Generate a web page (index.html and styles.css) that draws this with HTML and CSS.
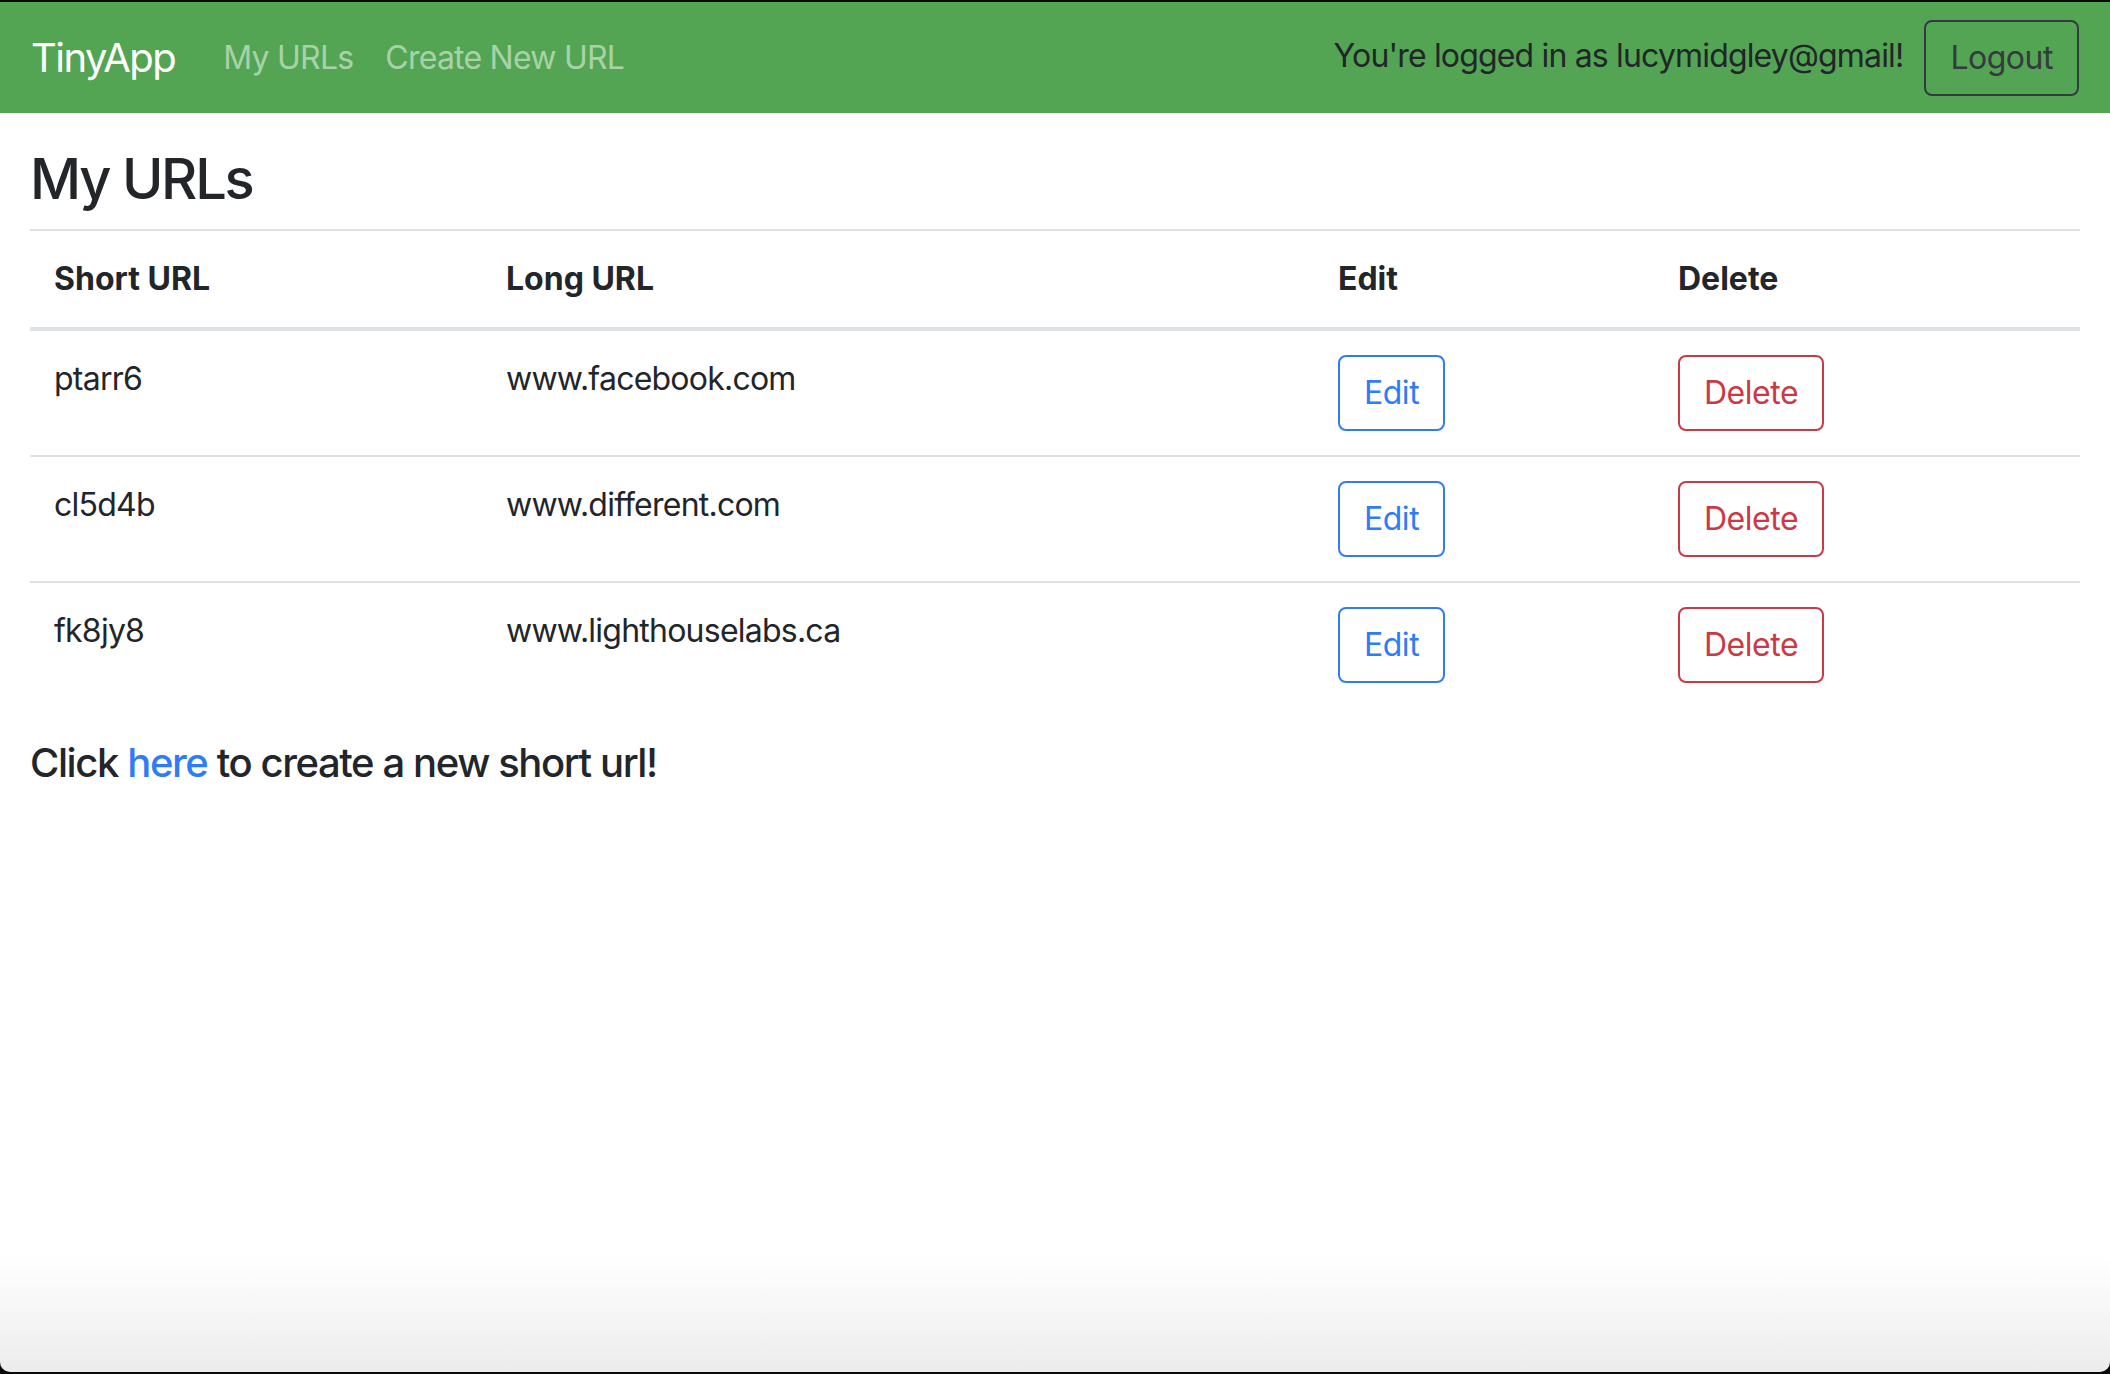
FILE: index.html
```html
<!DOCTYPE html>
<html lang="en">
<head>
<meta charset="utf-8">
<title>TinyApp</title>
<link rel="stylesheet" href="styles.css">
</head>
<body>
<div class="window">
  <nav class="navbar">
    <a class="brand" href="#">TinyApp</a>
    <div class="nav-links">
      <a class="nav-link" href="#">My URLs</a>
      <a class="nav-link" href="#">Create New URL</a>
    </div>
    <div class="nav-right">
      <span class="logged">You're logged in as lucymidgley@gmail!</span>
      <button class="btn btn-logout">Logout</button>
    </div>
  </nav>
  <main class="content">
    <h3 class="title">My URLs</h3>
    <table class="table">
      <thead>
        <tr>
          <th class="c1">Short URL</th>
          <th class="c2">Long URL</th>
          <th class="c3">Edit</th>
          <th class="c4">Delete</th>
        </tr>
      </thead>
      <tbody>
        <tr>
          <td>ptarr6</td>
          <td>www.facebook.com</td>
          <td><button class="btn btn-edit">Edit</button></td>
          <td><button class="btn btn-delete">Delete</button></td>
        </tr>
        <tr>
          <td>cl5d4b</td>
          <td>www.different.com</td>
          <td><button class="btn btn-edit">Edit</button></td>
          <td><button class="btn btn-delete">Delete</button></td>
        </tr>
        <tr>
          <td>fk8jy8</td>
          <td>www.lighthouselabs.ca</td>
          <td><button class="btn btn-edit">Edit</button></td>
          <td><button class="btn btn-delete">Delete</button></td>
        </tr>
      </tbody>
    </table>
    <h5 class="cta">Click <a href="#">here</a> to create a new short url!</h5>
  </main>
</div>
</body>
</html>
```

FILE: styles.css
```css
html {
  background: #0a0a0a;
}
body {
  margin: 0;
  font-family: "Inter", "Liberation Sans", sans-serif;
  color: #222529;
}
.window {
  margin-top: 2px;
  min-height: 1370px;
  border-radius: 0 0 10px 10px;
  background: linear-gradient(to bottom, #ffffff 1255px, #ececec 1370px);
  overflow: hidden;
}
.navbar {
  display: flex;
  align-items: center;
  height: 111px;
  padding: 0 31px;
  background: #53a553;
  box-sizing: border-box;
}
.brand {
  color: #ffffff;
  font-size: 40px;
  letter-spacing: -0.038em;
  text-decoration: none;
  margin-right: 32px;
  line-height: 60px;
}
.nav-links {
  display: flex;
}
.nav-link {
  color: #a9d2a9;
  font-size: 32px;
  letter-spacing: -0.024em;
  text-decoration: none;
  padding: 0 16px;
  line-height: 48px;
}
.nav-right {
  margin-left: auto;
  display: flex;
  align-items: center;
}
.logged {
  font-size: 32px;
  letter-spacing: -0.026em;
  color: #222529;
  margin-right: 21px;
  margin-top: -4px;
}
.btn {
  font-family: inherit;
  font-size: 32px;
  letter-spacing: -0.015em;
  line-height: 48px;
  padding: 12px 24px;
  border: 2px solid;
  border-radius: 8px;
  background: transparent;
  cursor: pointer;
}
.btn-logout {
  color: #343a40;
  border-color: #343a40;
}
.btn-edit {
  color: #2f7df6;
  border-color: #2f7df6;
}
.btn-delete {
  color: #cb3a44;
  border-color: #cb3a44;
}
.content {
  padding: 33px 30px 0;
}
.title {
  margin: 0 0 16px;
  font-size: 56px;
  font-weight: 500;
  letter-spacing: -0.04em;
  line-height: 67px;
}
.table {
  width: 100%;
  border-collapse: collapse;
  margin-bottom: 32px;
  font-size: 32px;
}
.table th,
.table td {
  text-align: left;
  vertical-align: top;
  padding: 24px;
  line-height: 48px;
  border-top: 2px solid #dee2e6;
}
.table td {
  letter-spacing: -0.024em;
}
.table th {
  font-weight: 700;
  border-bottom: 4px solid #dee2e6;
}
.table tbody tr:first-child td {
  border-top: none;
}
.c1 { width: 404px; }
.c2 { width: 784px; }
.c3 { width: 292px; }
.cta {
  margin: 0;
  font-size: 40px;
  font-weight: 500;
  letter-spacing: -0.035em;
  line-height: 48px;
}
.cta a {
  color: #2f7df6;
  text-decoration: none;
}
```
